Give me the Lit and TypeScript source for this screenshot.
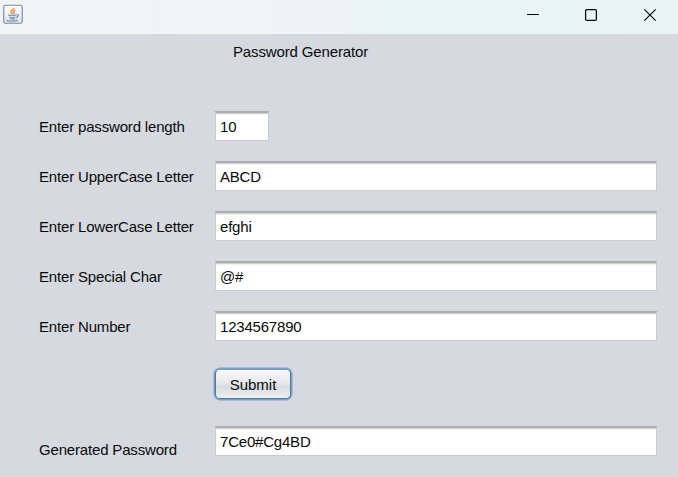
import { LitElement, html, css } from "lit";
import { customElement, property } from "lit/decorators.js";

@customElement("text-field")
class TextField extends LitElement {
  @property() value = "";
  static styles = css`
    :host { display: block; }
    .box {
      box-sizing: border-box; height: 30px; padding: 1px 0 0 4px;
      border: 1px solid #cbccd0; border-top: 2px solid #acadb0;
      background: linear-gradient(#d2d3d5 0 1px, #f3f3f3 1px 2px, #fff 2px);
      line-height: 25px; white-space: nowrap;
    }
  `;
  render() {
    return html`<div class="box">${this.value}</div>`;
  }
}

@customElement("title-bar")
class TitleBar extends LitElement {
  static styles = css`
    :host { display: block; }
    .bar {
      display: flex; justify-content: space-between; height: 34px;
      background: linear-gradient(90deg, #f2f3f5 0, #f0f4f5 35%, #eaf5f5 60%, #eaf4f5 100%);
    }
    .java { margin: 4px 0 0 3px; width: 20px; height: 20px; }
    .controls { width: 174px; height: 34px; }
  `;
  render() {
    return html`<div class="bar">
      <svg class="java" viewBox="0 0 20 20">
        <defs><linearGradient id="g" x2="0" y2="1"><stop offset="0" stop-color="#fdfdfd"/><stop offset=".55" stop-color="#f1f2f4"/><stop offset="1" stop-color="#dfe3e8"/></linearGradient></defs>
        <rect x=".75" y="1.25" width="18.5" height="18" rx="1.8" fill="url(#g)" stroke="#7b8fa3" stroke-width="1.2"/>
        <path d="M10.8 3.8C11.5 5.6 7.2 6.2 7.9 8.1C8.2 9 9.2 9.3 9.5 10.3M12.4 6.3C10.2 7.2 10 8 10.8 8.8C11.2 9.4 10.8 10 10.4 10.4" fill="none" stroke="#ee9a52" stroke-width="1.6"/>
        <path d="M5 10.9Q9.3 12.2 13 10.9M5.9 13Q9.4 14.2 12.6 13M6.8 14.7Q9.4 15.5 12 14.7M13.3 10.8C16.6 10 15.9 13 13.1 13.5M3.6 15.9C3.4 17.5 13.5 17.4 14.6 16" fill="none" stroke="#7f9ab4" stroke-width="1.3"/>
      </svg>
      <svg class="controls" viewBox="504 0 174 34" fill="none" stroke="#080808">
        <path d="M527 14.5H539"/>
        <rect x="585.6" y="9.6" width="10.8" height="10.8" rx="1.2" stroke-width="1.25"/>
        <path d="M644.3 9.3L655.7 20.7M655.7 9.3L644.3 20.7" stroke-width="1.2"/>
      </svg>
    </div>`;
  }
}

@customElement("app-root")
class AppRoot extends LitElement {
  static styles = css`
    :host {
      display: flex; flex-direction: column; box-sizing: border-box;
      height: 477px; overflow: hidden; background: #d6d9e0; color: #0a0a0a;
      font: 15px/20px "Liberation Sans", Arial, sans-serif;
    }
    .heading { margin: 8px 0 0 233px; white-space: nowrap; letter-spacing: -0.14px; }
    .rows { display: grid; gap: 20px; margin-top: 49px; }
    .row { display: grid; grid-template-columns: 176px 442px; padding-left: 39px; height: 30px; }
    .label { white-space: nowrap; line-height: 32px; letter-spacing: -0.17px; }
    text-field { letter-spacing: -0.2px; }
    .short { width: 54px; }
    .submit {
      box-sizing: border-box; width: 76px; height: 30px; margin: 28px 0 0 215px; padding: 0;
      border: 1px solid #66727f; border-top-color: #8798a9; border-radius: 5px;
      background: linear-gradient(#f8f8fa 0, #e9eaee 45%, #d8dbe0 60%, #eff1f4 100%);
      box-shadow: 0 0 0 1.5px #73a4d1; color: inherit; font: inherit; line-height: 30px;
    }
    .result { margin-top: 27px; }
    .result .label { line-height: 48px; }
  `;
  private rows = [
    ["Enter password length", "10"],
    ["Enter UpperCase Letter", "ABCD"],
    ["Enter LowerCase Letter", "efghi"],
    ["Enter Special Char", "@#"],
    ["Enter Number", "1234567890"],
  ];
  render() {
    return html`
      <title-bar></title-bar>
      <div class="heading">Password Generator</div>
      <div class="rows">
        ${this.rows.map(([label, value], i) => html`<div class="row">
          <span class="label">${label}</span>
          <text-field class=${i === 0 ? "short" : ""} .value=${value}></text-field>
        </div>`)}
      </div>
      <button class="submit">Submit</button>
      <div class="row result">
        <span class="label">Generated Password</span>
        <text-field .value=${"7Ce0#Cg4BD"}></text-field>
      </div>`;
  }
}
